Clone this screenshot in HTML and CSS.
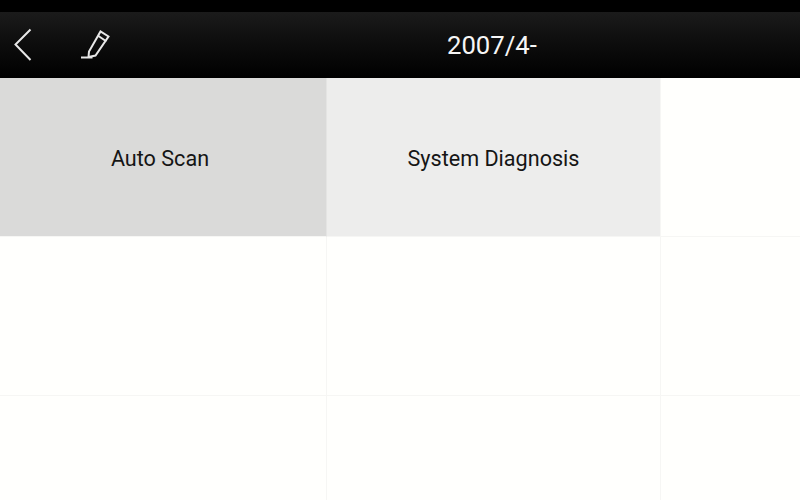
FILE: index.html
```html
<!DOCTYPE html>
<html lang="en">
<head>
<meta charset="utf-8">
<title>2007/4-</title>
<link rel="stylesheet" href="styles.css">
</head>
<body>
<div class="status"></div>
<header class="bar">
  <div class="icons">
    <svg class="back" width="18" height="34" viewBox="0 0 18 34"><path d="M16.500 1.500 1.500 16.500l15 15.500" /></svg>
    <svg class="pen" width="30" height="30" viewBox="0 0 30 30"><path d="M1 27.500H12.500M8.500 27 9 21.500 20.500 1.500 28.500 6.500 15.500 25.500ZM18.500 6 26.500 11.500" /></svg>
  </div>
  <h1 class="title">2007/4-</h1>
</header>
<main class="grid">
  <div class="cell cell-active">Auto Scan</div>
  <div class="cell cell-soft">System Diagnosis</div>
  <div class="cell"></div>
  <div class="cell"></div>
  <div class="cell"></div>
  <div class="cell"></div>
  <div class="cell"></div>
  <div class="cell"></div>
  <div class="cell"></div>
</main>
</body>
</html>
```

FILE: styles.css
```css
* { box-sizing: border-box; }
html, body { margin: 0; height: 100%; }
body {
  width: 800px;
  height: 500px;
  overflow: hidden;
  background: #fffffd;
  font-family: Roboto, "Liberation Sans", sans-serif;
  display: flex;
  flex-direction: column;
}
.status { height: 12px; background: #000; flex: none; }
.bar {
  height: 66px;
  flex: none;
  background: linear-gradient(#1b1b1b, #0f0f0f 40%, #000);
  display: flex;
  align-items: center;
}
.icons {
  display: flex;
  align-items: center;
  gap: 48px;
  padding-left: 14px;
}
.back, .pen {
  fill: none;
  stroke: #e8e8e8;
  stroke-width: 2;
}
.title {
  margin: 2px 0 0 337px;
  font-size: 25.700px;
  font-weight: 400;
  color: #f6f6f6;
  line-height: 1;
}
.grid {
  flex: 1;
  display: grid;
  grid-template-columns: 327px 334px 139px;
  grid-template-rows: 159px 159px 104px;
}
.cell {
  display: flex;
  align-items: center;
  justify-content: center;
  padding-top: 2px;
  font-size: 21.600px;
  color: #151515;
  border-right: 1px solid #f6f6f4;
  border-bottom: 1px solid #f6f6f4;
}
.cell:nth-child(3n) { border-right: 0; }
.cell:nth-child(n+7) { border-bottom: 0; }
.cell-active { background: #dadad9; padding-right: 6px; border-right-color: #e4e4e3; }
.cell-soft { background: #ededec; }
```
